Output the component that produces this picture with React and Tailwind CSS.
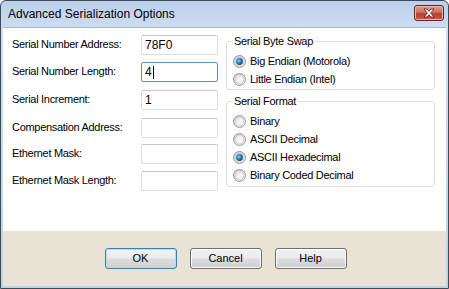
import React from "react";

const font = { fontFamily: '"Liberation Sans", Arial, sans-serif' };

function Radio({ checked, label }) {
  return (
    <div className="flex items-center h-[18px]">
      <svg width="13" height="13" viewBox="0 0 13 13" className="shrink-0">
        <defs>
          <linearGradient id="rbg" x1="0" y1="0" x2="1" y2="1">
            <stop offset="0" stopColor="#cfcfcf" />
            <stop offset="1" stopColor="#f6f6f6" />
          </linearGradient>
          <linearGradient id="rin" x1="0" y1="0" x2="1" y2="1">
            <stop offset="0" stopColor="#e8e8e8" />
            <stop offset="1" stopColor="#fbfbfb" />
          </linearGradient>
          <radialGradient id="rdot" cx="0.4" cy="0.4" r="0.7">
            <stop offset="0" stopColor="#8fd3f7" />
            <stop offset="0.45" stopColor="#2b86c6" />
            <stop offset="1" stopColor="#0c2d55" />
          </radialGradient>
        </defs>
        <circle cx="6.5" cy="6.5" r="6" fill="url(#rbg)" stroke="#979797" strokeWidth="1" />
        <circle cx="6.5" cy="6.5" r="4.3" fill="url(#rin)" stroke="#c8c8c8" strokeWidth="0.8" />
        {checked && <circle cx="6.5" cy="6.5" r="3.4" fill="url(#rdot)" />}
      </svg>
      <span className="ml-[4px] text-[11px] tracking-[-0.3px] text-black leading-[13px]">{label}</span>
    </div>
  );
}

function Field({ label, value, focused, caret, className = "" }) {
  return (
    <div className={"flex items-center h-[20px] " + className}>
      <div className="w-[129px] text-[11px] tracking-[-0.3px] text-black leading-[13px] -mt-[1px]">{label}</div>
      <div
        className={
          "w-[77px] h-[20px] flex items-center pl-[3px] text-[12px] text-black bg-white border rounded-[2px] " +
          (focused
            ? "border-[#5a8fc4]"
            : "border-[#d8dde3] border-t-[#c2c7cd]")
        }
      >
        <span>{value}</span>
        {caret && <span className="inline-block w-[1px] h-[13px] bg-black ml-[1px]" />}
      </div>
    </div>
  );
}

function Btn({ children, def }) {
  return (
    <button
      className={
        "w-[72px] h-[21px] rounded-[3px] border text-[11px] text-black flex items-center justify-center bg-[linear-gradient(#f2f2f2_0%,#ebebeb_48%,#dddddd_52%,#cfcfcf_100%)] " +
        (def
          ? "border-[#3c7fb1] shadow-[inset_0_0_0_1px_#a8e0f8]"
          : "border-[#707070] shadow-[inset_0_0_0_1px_#fcfcfc]")
      }
      style={font}
    >
      {children}
    </button>
  );
}

export default function App() {
  return (
    <div className="w-[449px] h-[289px] overflow-hidden" style={font}>
      <div className="w-[449px] h-[289px] flex flex-col border border-[#3f4a57] rounded-t-[6px] bg-[linear-gradient(#bcd0e9,#cfdff2_30px,#bcd3ee)]">
        <div className="h-[26px] flex items-start justify-between shrink-0">
          <div className="pl-[7px] pt-[6px] text-[12px] leading-[14px] text-black">
            Advanced Serialization Options
          </div>
          <div className="mt-[4px] mr-[4px] w-[30px] h-[16px] rounded-[3px] border border-[#5a2a2a] bg-[linear-gradient(#e3a092,#cf6f5e_45%,#b8412e_55%,#c45a45)] shadow-[inset_0_0_0_1px_#eab8ad] flex items-center justify-center">
            <svg width="14" height="10" viewBox="0 0 14 10">
              <path
                d="M2 1 L5 1 L7 3.3 L9 1 L12 1 L8.6 5 L12 9 L9 9 L7 6.7 L5 9 L2 9 L5.4 5 Z"
                fill="#ffffff"
                stroke="#5b2b28"
                strokeWidth="0.9"
                strokeLinejoin="round"
              />
            </svg>
          </div>
        </div>
        <div className="flex-1 flex flex-col mx-[2px] mb-[2px] border-t border-[#a6b6c9]">
          <div className="h-[203px] bg-white flex pl-[9px] pt-[7px]">
            <div className="flex flex-col">
              <Field label="Serial Number Address:" value="78F0" />
              <Field label="Serial Number Length:" value="4" focused caret className="mt-[7px]" />
              <Field label="Serial Increment:" value="1" className="mt-[8px]" />
              <Field label="Compensation Address:" value="" className="mt-[8px]" />
              <Field label="Ethernet Mask:" value="" className="mt-[6px]" />
              <Field label="Ethernet Mask Length:" value="" className="mt-[7px]" />
            </div>
            <div className="ml-[8px] w-[209px] flex flex-col">
              <fieldset className="border border-[#d5dfe5] rounded-[3px] px-[6px] pt-[4px] pb-[1px]">
                <legend className="-ml-[1px] px-[2px] text-[11px] tracking-[-0.3px] leading-[13px] text-black">
                  Serial Byte Swap
                </legend>
                <Radio checked label="Big Endian (Motorola)" />
                <Radio label="Little Endian (Intel)" />
              </fieldset>
              <fieldset className="mt-[5px] border border-[#d5dfe5] rounded-[3px] px-[6px] pt-[4px] pb-[2px]">
                <legend className="-ml-[1px] px-[2px] text-[11px] tracking-[-0.3px] leading-[13px] text-black">
                  Serial Format
                </legend>
                <Radio label="Binary" />
                <Radio label="ASCII Decimal" />
                <Radio checked label="ASCII Hexadecimal" />
                <Radio label="Binary Coded Decimal" />
              </fieldset>
            </div>
          </div>
          <div className="flex-1 bg-[#e8e3d5] flex justify-center items-start pt-[17px] gap-[13px] pl-[2px]">
            <Btn def>OK</Btn>
            <Btn>Cancel</Btn>
            <Btn>Help</Btn>
          </div>
        </div>
      </div>
    </div>
  );
}
